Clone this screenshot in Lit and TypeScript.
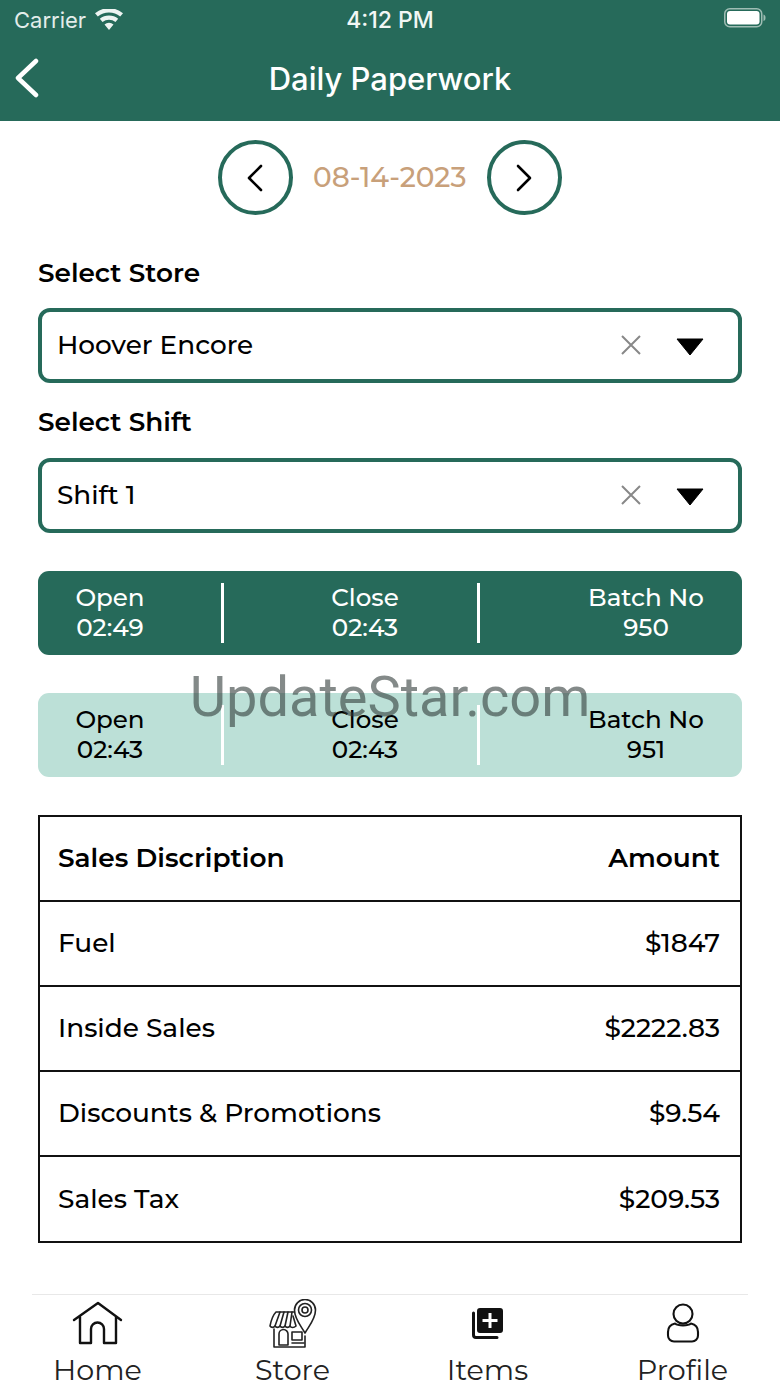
import { LitElement, html, css, svg } from 'lit'
import { customElement } from 'lit/decorators.js'

const chevron = (d: string) => html`<svg width="26" height="30" viewBox="0 0 26 30" fill="none" stroke="#000" stroke-width="2.6" stroke-linecap="round" stroke-linejoin="round"><path d="${d}"/></svg>`

const clearArrow = html`
  <svg class="x" width="22" height="22" viewBox="0 0 22 22" stroke="#888" stroke-width="2" fill="none"><path d="M2 2 L20 20 M20 2 L2 20"/></svg>
  <svg class="caret" width="28" height="18" viewBox="0 0 28 18"><path d="M1 1 H27 L14 17 Z" fill="#000" stroke="#000" stroke-linejoin="round"/></svg>
`

// tab icons share one 60x50 box so they line up on the same centre
const homeIcon = svg`<path d="M6 21 L30 4 L53 21 M12 18 V44 H23 V30 A6.500 6.500 0 0 1 36 30 V44 H48 V18" fill="none" stroke="#111" stroke-width="2.400" stroke-linecap="round" stroke-linejoin="round"/>`
const storeIcon = svg`<g fill="none" stroke="#222" stroke-width="1.600" stroke-linejoin="round" stroke-linecap="round">
  <path d="M13 13 H31 M13 13 C10 16 8 22 7 27 A3 3 0 0 0 12 27 A3 3 0 0 0 17 27 A3 3 0 0 0 22 27 A3 3 0 0 0 27 27 C28 29 31 29 33 27 L30 17"/>
  <path d="M17 13 L12 27 M21 13 L17 27 M25 13 L22 27 M29 13 L27 27"/>
  <path d="M11 30 V48 H42 V37"/>
  <path d="M16 46 V35 A4.500 4.500 0 0 1 25 35 V46 Z"/>
  <path d="M29 33 H39 V41 H29 Z M29 44 H41"/>
  <path d="M42 34 C38 27 31.500 20 31.500 11 A10.500 10.500 0 0 1 52.500 11 C52.500 20 46 27 42 34 Z"/>
  <circle cx="42" cy="11" r="6.500"/>
  <circle cx="42" cy="11" r="3"/>
</g>`
const itemsIcon = svg`<path d="M22 9 H42 A3 3 0 0 1 45 12 V31 A3 3 0 0 1 42 34 H22 A3 3 0 0 1 19 31 V12 A3 3 0 0 1 22 9 Z M30.500 14 V20 H24.500 V23 H30.500 V29 H33.500 V23 H39.500 V20 H33.500 V14 Z" fill="#111" fill-rule="evenodd"/><path d="M15.500 14 V36 A2.500 2.500 0 0 0 18 38.500 H39" fill="none" stroke="#111" stroke-width="3" stroke-linecap="round"/>`
const profileIcon = svg`<g fill="none" stroke="#111" stroke-width="2.100" stroke-linejoin="round"><circle cx="30" cy="15" r="9.500"/><path d="M22 24.500 C17 25.500 15 29 15 33 V36.500 A6 6 0 0 0 21 42.500 H39 A6 6 0 0 0 45 36.500 V33 C45 29 43 25.500 38 24.500 C35 27 25 27 22 24.500 Z"/></g>`

const tabs = [
  { label: 'Home', icon: homeIcon },
  { label: 'Store', icon: storeIcon },
  { label: 'Items', icon: itemsIcon },
  { label: 'Profile', icon: profileIcon },
]

const salesRows = [
  ['Fuel', '$1847'],
  ['Inside Sales', '$2222.83'],
  ['Discounts & Promotions', '$9.54'],
  ['Sales Tax', '$209.53'],
]

const shifts = [
  { cls: 'dark', open: '02:49', close: '02:43', batch: '950' },
  { cls: 'light', open: '02:43', close: '02:43', batch: '951' },
]

@customElement('app-root')
export class AppRoot extends LitElement {
  static styles = css`
    :host {
      display: block;
      position: relative;
      width: 780px;
      height: 1387px;
      overflow: hidden;
      background: #fff;
      color: #000;
      font-family: Montserrat, 'Open Sans', 'DejaVu Sans', sans-serif;
    }
    .head { background: #266a5a; height: 121px; color: #fff; }
    .status { height: 40px; display: grid; grid-template-columns: 1fr auto 1fr; align-items: center; padding: 0 14px 1px; box-sizing: border-box; font: 400 22px Inter, sans-serif; }
    .status .left { display: flex; align-items: center; gap: 8px; color: #e3edea; }
    .status .time { font-size: 23px; font-weight: 500; color: #f2f7f5; }
    .status .right { justify-self: end; }
    .title { height: 81px; display: flex; align-items: center; justify-content: center; position: relative; padding-bottom: 4px; box-sizing: border-box; font: 500 31px Inter, sans-serif; }
    .back { position: absolute; left: 14px; top: 18px; }
    .date { display: flex; justify-content: center; align-items: center; gap: 20px; margin-top: 19px; height: 75px; }
    .round { width: 75px; height: 75px; box-sizing: border-box; border: 4px solid #266a5a; border-radius: 50%; display: flex; align-items: center; justify-content: center; }
    .date span { color: #c8a07a; font-size: 28px; font-weight: 500; width: 154px; text-align: center; white-space: nowrap; padding-right: 2px; padding-bottom: 1px; box-sizing: border-box; }
    .form { padding: 42px 38px 0; }
    label { display: block; font-size: 26.300px; font-weight: 600; line-height: 32px; }
    label.second { margin-top: 23px; }
    .select { height: 75px; box-sizing: border-box; border: 4px solid #266a5a; border-radius: 12px; display: flex; align-items: center; padding: 0 34px 2px 15px; font-size: 26.300px; font-weight: 500; margin-top: 19px; }
    .select.second { margin-top: 20px; }
    .select .val { flex: 1; }
    .select .x { margin-right: 34px; }
    .select .caret { margin-top: 5px; }
    .shift { margin: 38px 38px 0; height: 84px; border-radius: 11px; display: grid; grid-template-columns: 183px 3px 253px 3px 262px; align-items: center; font-size: 24.600px; font-weight: 500; line-height: 30px; text-align: center; }
    .shift.dark { background: #266a5a; color: #fff; }
    .shift.light { background: #bce0d7; }
    .shift i { height: 60px; background: #fff; }
    .cell { display: flex; flex-direction: column; white-space: nowrap; padding-bottom: 3px; }
    .cell.open { padding-right: 39px; }
    .cell.close { padding-left: 29px; }
    .cell.batch { padding-left: 70px; }
    .sales { margin: 38px 38px 0; border: 2px solid #111; font-size: 26.400px; font-weight: 500; }
    .row { height: 85px; box-sizing: border-box; display: flex; justify-content: space-between; align-items: center; padding: 0 20px 2px 18px; border-top: 2px solid #111; }
    .row:first-child { border-top: 0; height: 83px; font-weight: 600; }
    .row:last-child { height: 86px; }
    .mark { position: absolute; left: 0; right: 0; top: 664px; text-align: center; font: 400 56px Roboto, sans-serif; color: rgba(50, 60, 58, 0.6); pointer-events: none; }
    .rule { position: absolute; left: 32px; right: 32px; top: 1294px; border-top: 1px solid #e8e8e8; }
    nav { position: absolute; left: 0; right: 0; top: 1299px; display: grid; grid-template-columns: repeat(4, 195px); }
    .tab { display: flex; flex-direction: column; align-items: center; font-size: 28.600px; color: #222; line-height: 36px; }
    .tab svg { display: block; margin-bottom: 3px; }
  `

  render() {
    return html`
      <div class="head">
        <div class="status">
          <div class="left">Carrier
            <svg width="30" height="22" viewBox="0 0 30 22" fill="#eef4f2"><path d="M15 21 L10.500 15.500 A7 7 0 0 1 19.500 15.500 Z M8.500 13 L5.800 9.800 A14.500 14.500 0 0 1 24.200 9.800 L21.500 13 A10.500 10.500 0 0 0 8.500 13 Z M3.800 7.500 L1 4.200 A22 22 0 0 1 29 4.200 L26.200 7.500 A18 18 0 0 0 3.800 7.500 Z"/></svg>
          </div>
          <div class="time">4:12 PM</div>
          <div class="right">
            <svg width="42" height="20" viewBox="0 0 42 20"><rect x="0.750" y="0.750" width="37" height="18" rx="5" fill="none" stroke="#9fbdb4" stroke-width="1.500"/><rect x="3" y="3" width="32.500" height="13.500" rx="3" fill="#fff"/><path d="M39.500 6.500 C41 7 41.500 8 41.500 9.700 C41.500 11.500 41 12.500 39.500 13 Z" fill="#9fbdb4"/></svg>
          </div>
        </div>
        <div class="title">
          <svg class="back" width="26" height="40" viewBox="0 0 26 40" fill="none" stroke="#fff" stroke-width="4.500" stroke-linecap="round" stroke-linejoin="round"><path d="M22 3 L4 20 L22 37"/></svg>
          Daily Paperwork
        </div>
      </div>

      <div class="date">
        <div class="round">${chevron('M18 3 L6 15 L18 27')}</div>
        <span>08-14-2023</span>
        <div class="round">${chevron('M6 3 L18 15 L6 27')}</div>
      </div>

      <div class="form">
        <label>Select Store</label>
        <div class="select"><div class="val">Hoover Encore</div>${clearArrow}</div>
        <label class="second">Select Shift</label>
        <div class="select second"><div class="val">Shift 1</div>${clearArrow}</div>
      </div>

      ${shifts.map(s => html`
        <div class="shift ${s.cls}">
          <div class="cell open"><span>Open</span><span>${s.open}</span></div>
          <i></i>
          <div class="cell close"><span>Close</span><span>${s.close}</span></div>
          <i></i>
          <div class="cell batch"><span>Batch No</span><span>${s.batch}</span></div>
        </div>
      `)}

      <div class="sales">
        <div class="row"><span>Sales Discription</span><span>Amount</span></div>
        ${salesRows.map(r => html`<div class="row"><span>${r[0]}</span><span>${r[1]}</span></div>`)}
      </div>

      <div class="mark">UpdateStar.com</div>

      <div class="rule"></div>
      <nav>
        ${tabs.map(t => html`<div class="tab"><svg width="60" height="50" viewBox="0 0 60 50">${t.icon}</svg>${t.label}</div>`)}
      </nav>
    `
  }
}
